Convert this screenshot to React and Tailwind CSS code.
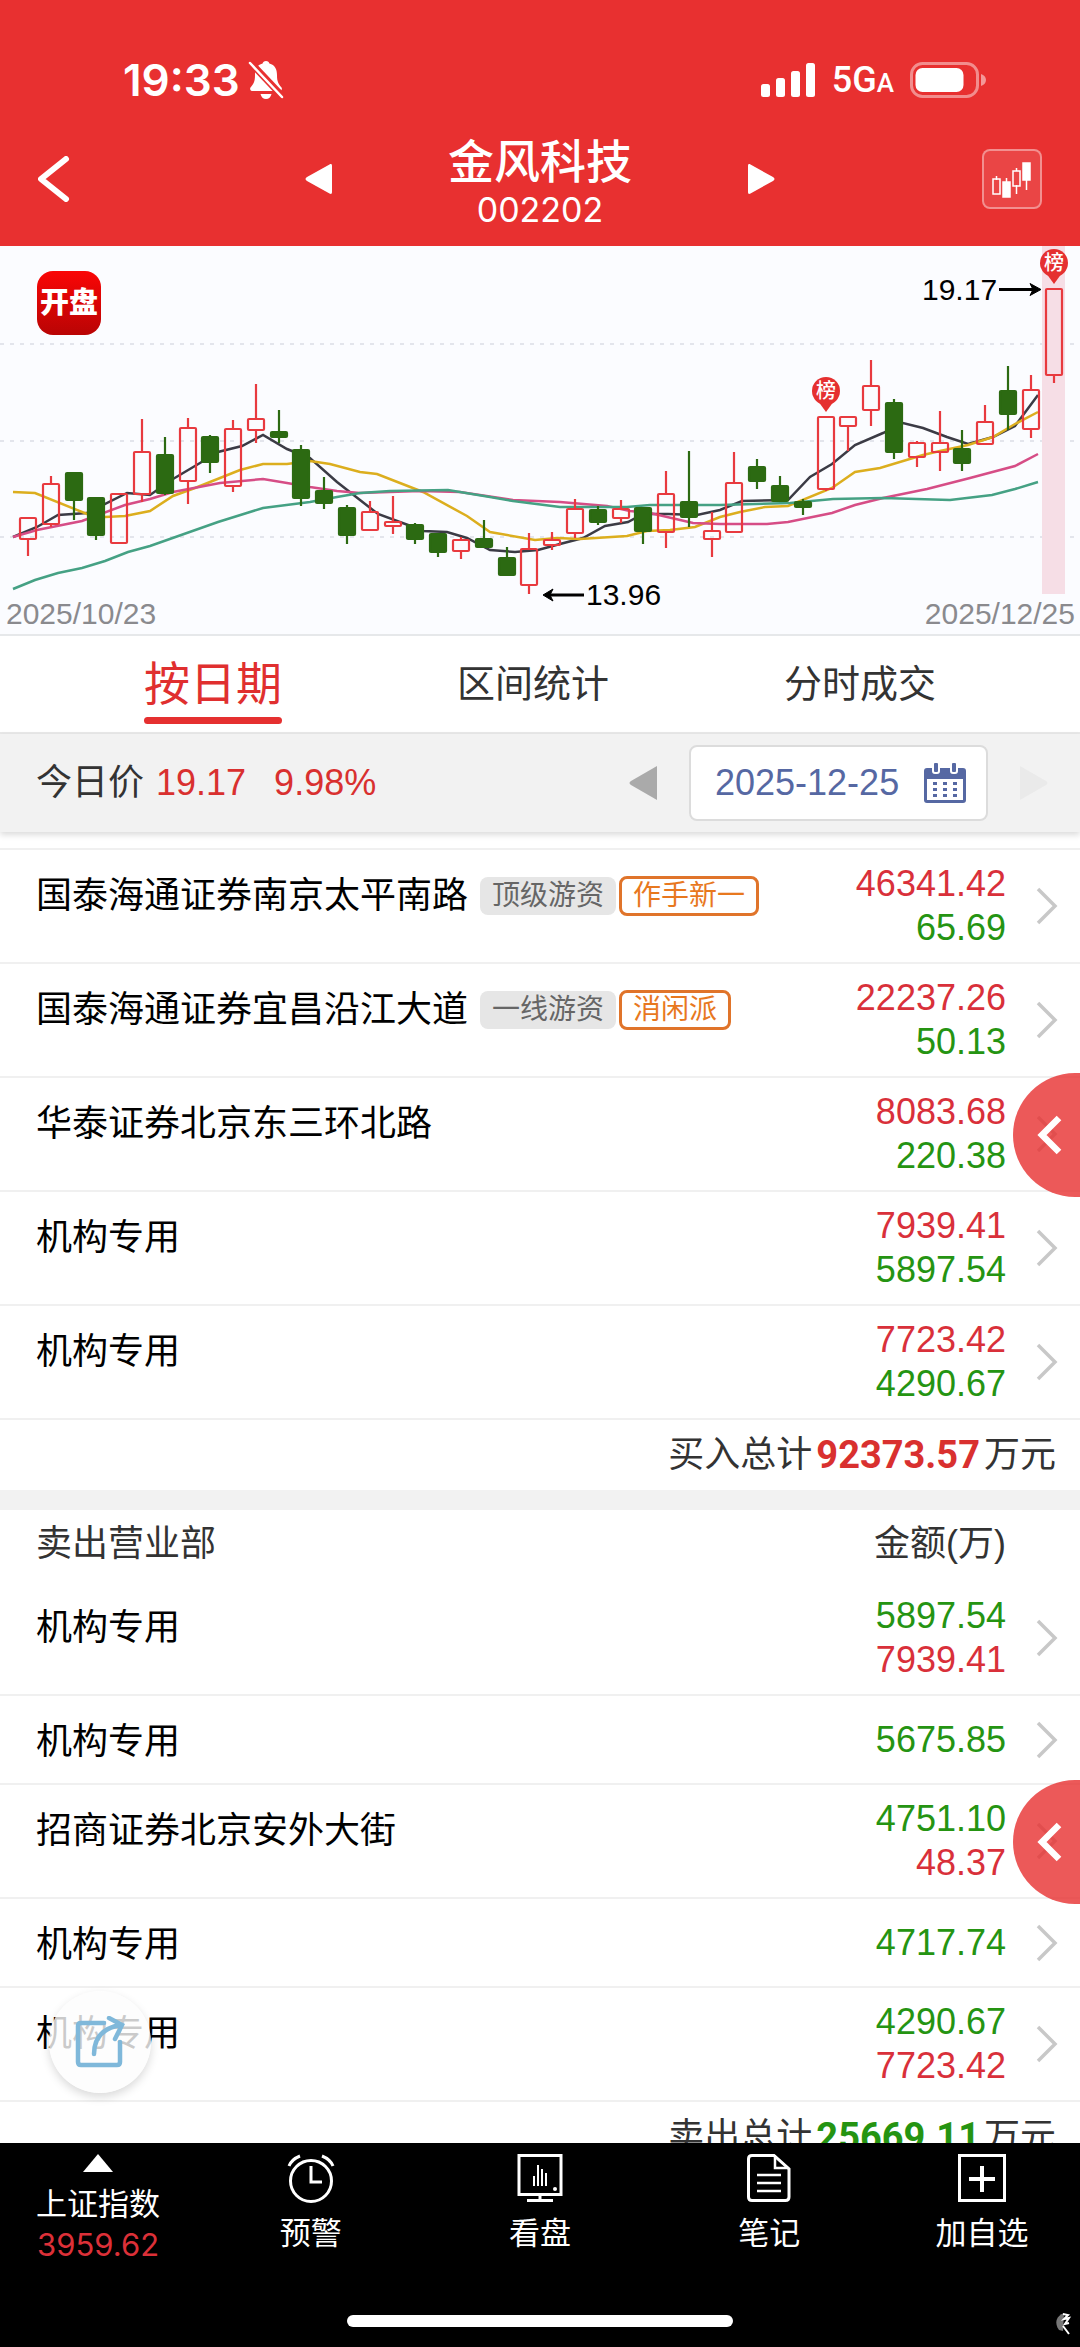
import { useState } from 'react'
import clsx from 'clsx'

const RED = '#e83a3f'
const GREEN = '#2c6a12'

// [high, body top, body bottom, low, rising]
const candles = [
  [518, 518, 539, 556, 1],
  [476, 484, 524, 527, 1],
  [472, 473, 500, 520, 0],
  [498, 498, 535, 540, 0],
  [494, 494, 543, 543, 1],
  [419, 452, 494, 502, 1],
  [437, 455, 493, 495, 0],
  [418, 428, 481, 504, 1],
  [435, 437, 462, 473, 0],
  [420, 429, 486, 492, 1],
  [384, 419, 430, 443, 1],
  [410, 432, 437, 443, 0],
  [445, 450, 498, 506, 0],
  [477, 491, 503, 509, 0],
  [505, 508, 535, 544, 0],
  [501, 512, 530, 530, 1],
  [496, 522, 526, 534, 1],
  [523, 525, 539, 544, 0],
  [533, 534, 552, 557, 0],
  [537, 540, 551, 559, 1],
  [520, 539, 547, 548, 0],
  [547, 558, 575, 576, 0],
  [533, 549, 585, 594, 1],
  [532, 540, 545, 550, 1],
  [499, 509, 533, 538, 1],
  [506, 510, 522, 525, 0],
  [500, 509, 518, 523, 1],
  [508, 508, 531, 544, 0],
  [471, 494, 532, 548, 1],
  [451, 502, 517, 527, 0],
  [512, 531, 539, 557, 1],
  [452, 483, 532, 533, 1],
  [459, 467, 481, 489, 0],
  [476, 486, 501, 502, 0],
  [499, 502, 507, 515, 0],
  [417, 417, 489, 491, 1],
  [417, 417, 426, 451, 1],
  [360, 386, 410, 426, 1],
  [399, 403, 452, 459, 0],
  [441, 443, 457, 467, 1],
  [411, 443, 452, 471, 1],
  [430, 449, 463, 471, 0],
  [405, 422, 444, 444, 1],
  [366, 391, 414, 430, 0],
  [375, 390, 429, 438, 1],
  [289, 289, 375, 383, 1],
]

const averages = [
  {
    color: '#3b3b45',
    points:
      '13,537 37,527 58,515 87,513 127,493 150,495 173,479 200,463 218,452 242,446 263,435 287,449 310,458 337,482 360,500 378,514 408,525 423,531 447,532 467,538 490,550 515,552 538,550 560,544 583,538 605,526 628,522 643,514 668,514 697,515 720,510 742,501 788,500 810,477 832,464 855,445 883,433 903,423 923,428 947,437 968,444 993,437 1015,426 1038,395',
  },
  {
    color: '#dcae1e',
    points:
      '13,492 35,493 87,514 105,517 125,516 150,511 173,496 195,488 240,470 263,464 287,464 310,461 330,464 360,472 377,474 423,492 467,516 490,532 535,540 557,538 580,539 627,536 647,531 670,530 695,527 720,517 740,512 765,507 788,506 832,488 855,472 880,468 923,455 940,451 968,445 993,437 1015,424 1038,412',
  },
  {
    color: '#d64d86',
    points:
      '13,537 37,530 82,521 125,505 150,499 173,492 220,483 263,479 287,483 310,487 337,491 360,493 420,491 460,492 513,500 560,502 607,506 630,511 650,513 693,523 720,524 767,524 788,522 832,513 855,505 883,498 927,489 970,478 1015,466 1038,454',
  },
  {
    color: '#45a184',
    points:
      '13,589 35,580 58,573 82,568 105,561 128,552 150,546 218,522 263,508 310,502 337,497 360,493 390,491 448,490 490,497 513,501 560,507 627,507 650,505 720,505 790,503 833,499 883,498 950,500 992,495 1015,489 1038,482',
  },
]

const buyers = [
  { name: '国泰海通证券南京太平南路', level: '顶级游资', alias: '作手新一', buy: '46341.42', sell: '65.69' },
  { name: '国泰海通证券宜昌沿江大道', level: '一线游资', alias: '消闲派', buy: '22237.26', sell: '50.13' },
  { name: '华泰证券北京东三环北路', buy: '8083.68', sell: '220.38' },
  { name: '机构专用', buy: '7939.41', sell: '5897.54' },
  { name: '机构专用', buy: '7723.42', sell: '4290.67' },
]

const sellers = [
  { name: '机构专用', sell: '5897.54', buy: '7939.41' },
  { name: '机构专用', sell: '5675.85' },
  { name: '招商证券北京安外大街', sell: '4751.10', buy: '48.37' },
  { name: '机构专用', sell: '4717.74' },
  { name: '机构专用', sell: '4290.67', buy: '7723.42' },
]

const tabs = ['按日期', '区间统计', '分时成交']

function StatusBar() {
  return (
    <div className="flex h-28 items-center justify-between pt-12 pr-[94px] pl-[123px] text-white">
      <div className="flex items-center gap-2 font-[Inter] text-[44px] leading-none font-semibold">
        19:33
        <svg className="h-[38px] w-9" viewBox="0 0 36 38" fill="currentColor">
          <path d="M18 0c2 0 3 1 3.4 2.6C27 4 29 8.500 29 14c0 7 1.500 9 4.500 12.500.8 1 .3 3.500-1.500 3.500H4c-1.800 0-2.300-2.500-1.500-3.500C5.500 23 7 21 7 14c0-5.500 2-10 7.600-11.400C15 1 16 0 18 0z" />
          <path d="M12.500 33h11c-.6 3-2.800 5-5.500 5s-4.900-2-5.500-5z" />
          <path d="M2 1l33 35" stroke="#e83030" strokeWidth="7" />
          <path d="M2 2l32 34" stroke="currentColor" strokeWidth="2.500" strokeLinecap="round" />
        </svg>
      </div>
      <div className="flex items-center">
        <svg className="h-[34px] w-[54px]" viewBox="0 0 54 34" fill="currentColor">
          <rect x="0" y="21" width="9" height="13" rx="2.500" />
          <rect x="15" y="15" width="9" height="19" rx="2.500" />
          <rect x="30" y="8" width="9" height="26" rx="2.500" />
          <rect x="45" y="0" width="9" height="34" rx="2.500" />
        </svg>
        <span className="ml-[17px] font-[Roboto] text-4xl leading-none font-medium">
          5G<span className="text-[26px]">A</span>
        </span>
        <svg className="ml-4 h-9 w-[76px]" viewBox="0 0 76 36" fill="none">
          <rect x="1.500" y="1.500" width="66" height="33" rx="11" stroke="#fff" strokeOpacity=".45" strokeWidth="3" />
          <rect x="5.500" y="6" width="48" height="24" rx="7" fill="#fff" />
          <path d="M71 12c3 1 5 3 5 6s-2 5-5 6z" fill="#fff" fillOpacity=".5" />
        </svg>
      </div>
    </div>
  )
}

function NavBar() {
  return (
    <div className="grid h-[134px] grid-cols-[1fr_auto_1fr] items-center px-[38px] text-white">
      <button aria-label="返回" className="w-8">
        <svg className="h-[46px] w-8" viewBox="0 0 32 46" fill="none">
          <path d="M28 3L3 23l25 20" stroke="#fff" strokeWidth="6" strokeLinecap="round" strokeLinejoin="round" />
        </svg>
      </button>
      <div className="flex items-center gap-[115px]">
        <button aria-label="上一只">
          <svg className="h-8 w-7" viewBox="0 0 28 32" fill="#fff">
            <path d="M27 3v26c0 2-1 2.500-2.500 1.500L2 18c-2-1.200-2-2.800 0-4L24.500 1.500C26 .5 27 1 27 3z" />
          </svg>
        </button>
        <div className="pt-[14px] text-center">
          <h1 className="text-[46px] leading-[48px] font-medium">金风科技</h1>
          <p className="font-[Inter] text-[34px] leading-[48px]">002202</p>
        </div>
        <button aria-label="下一只">
          <svg className="h-8 w-7" viewBox="0 0 28 32" fill="#fff">
            <path d="M1 3v26c0 2 1 2.500 2.500 1.500L26 18c2-1.200 2-2.800 0-4L3.500 1.500C2 .5 1 1 1 3z" />
          </svg>
        </button>
      </div>
      <button
        aria-label="K线"
        className="flex h-[60px] w-[60px] items-center justify-center justify-self-end rounded-lg border-2 border-white/40 bg-white/10"
      >
        <svg className="h-[38px] w-10" viewBox="0 0 40 38" fill="none" stroke="#fff" strokeWidth="1.500">
          <path d="M4.500 16v4M24.500 8v3M24.500 25v9M14.500 18v4M34.500 20v10" />
          <rect x="1" y="19" width="7" height="15" />
          <rect x="11" y="22" width="7" height="15" fill="#fff" />
          <rect x="21" y="11" width="7" height="15" />
          <rect x="31" y="3" width="7" height="17" fill="#fff" />
        </svg>
      </button>
    </div>
  )
}

function Pin({ x, y }) {
  return (
    <g>
      <path d={`M${x - 8} ${y + 10}L${x} ${y + 21}L${x + 8} ${y + 10}z`} fill="#e53030" />
      <circle cx={x} cy={y} r="14" fill="#e53030" />
      <text x={x} y={y + 7} textAnchor="middle" fontSize="20" fontWeight="500" fill="#fff">
        榜
      </text>
    </g>
  )
}

function Chart() {
  return (
    <section className="relative border-b-2 border-[#e6e8ea] bg-[#fbfcff]">
      <svg className="block w-full" viewBox="0 246 1080 388">
        {[344, 441, 537].map((y) => (
          <line key={y} x1="0" x2="1080" y1={y} y2={y} stroke="#dcdde6" strokeWidth="1.500" strokeDasharray="4 6" />
        ))}
        <rect x="1042" y="246" width="23" height="348" fill="#f6dee6" />
        {averages.map((line) => (
          <polyline key={line.color} points={line.points} fill="none" stroke={line.color} strokeWidth="2.500" />
        ))}
        {candles.map(([high, top, bottom, low, up], i) => {
          const x = Math.round(28 + i * 22.79)
          const color = up ? RED : GREEN
          return (
            <g key={i} stroke={color} strokeWidth="2.200">
              <path d={`M${x} ${high}V${top}M${x} ${bottom}V${low}`} />
              <rect x={x - 8} y={top} width="16" height={bottom - top} rx="1" fill={up ? 'none' : color} />
            </g>
          )
        })}
        <Pin x={826} y={391} />
        <Pin x={1054} y={263} />
        <g stroke="#000" strokeWidth="3">
          <path d="M999 289.500H1037M547 595H584" />
          <path d="M1030 283.500l11 6-11 6 3-6zM553 589l-10 6 10 6-3-6z" strokeWidth="1" />
        </g>
        <g className="font-['Liberation_Sans']" fontSize="30">
          <text x="922" y="300">19.17</text>
          <text x="586" y="605">13.96</text>
          <text x="6" y="624" fill="#8a8a8e">2025/10/23</text>
          <text x="1075" y="624" textAnchor="end" fill="#8a8a8e">2025/12/25</text>
        </g>
      </svg>
      <div className="absolute top-[25px] left-[37px] flex h-16 w-16 items-center justify-center rounded-2xl bg-linear-to-b from-[#fa0606] to-[#b90404] text-[29px] leading-none font-black text-white">
        开盘
      </div>
    </section>
  )
}

function Tabs() {
  const [active, setActive] = useState(0)

  return (
    <nav className="flex h-[98px] justify-between border-b-2 border-[#e8e8e8] px-36">
      {tabs.map((label, i) => (
        <button
          key={label}
          onClick={() => setActive(i)}
          className={clsx('relative', active === i ? 'text-[46px] text-[#e02f2f]' : 'text-[38px] text-[#333]')}
        >
          {label}
          {active === i && <span className="absolute inset-x-0 bottom-2 h-[7px] rounded-full bg-[#e53030]" />}
        </button>
      ))}
    </nav>
  )
}

function PriceBar() {
  return (
    <div className="relative flex h-[98px] items-center bg-[#f2f2f2] pr-8 pl-9 shadow-[0_3px_6px_rgba(0,0,0,0.14)]">
      <p className="flex-1 text-4xl text-[#333]">
        今日价
        <span className="ml-3 text-[#d9302f]">19.17</span>
        <span className="ml-7 text-[#d9302f]">9.98%</span>
      </p>
      <button aria-label="前一天" className="mr-8">
        <svg className="h-[34px] w-7" viewBox="0 0 28 34" fill="#aaa">
          <path d="M28 0v34L2 19c-2-1.300-2-2.700 0-4z" />
        </svg>
      </button>
      <label className="flex h-[76px] w-[299px] items-center rounded-lg border-2 border-[#dcdcdc] bg-white pr-5 pl-6">
        <input
          type="text"
          aria-label="日期"
          defaultValue="2025-12-25"
          className="min-w-0 flex-1 bg-transparent text-4xl text-[#5668a3] outline-none"
        />
        <svg className="h-10 w-[42px]" viewBox="0 0 42 40" fill="#5668a3">
          <path fillRule="evenodd" d="M3 5h36c2 0 3 1 3 3v29c0 2-1 3-3 3H3c-2 0-3-1-3-3V8c0-2 1-3 3-3zm0 11v21h36V16z" />
          <g stroke="#fff" strokeWidth="2">
            <rect x="9" y="-1" width="6" height="11" rx="2" />
            <rect x="27" y="-1" width="6" height="11" rx="2" />
          </g>
          {[19, 25, 31].map((y) =>
            [9, 19, 29].map((x) => <rect key={`${x}-${y}`} x={x} y={y} width="4" height="3" />)
          )}
        </svg>
      </label>
      <button aria-label="后一天" className="ml-8">
        <svg className="h-[34px] w-7" viewBox="0 0 28 34" fill="#eaeaea">
          <path d="M0 0v34l26-15c2-1.300 2-2.700 0-4z" />
        </svg>
      </button>
    </div>
  )
}

function BrokerRow({ broker, sellFirst }) {
  const buy = broker.buy && <p className="text-[#d9303a]">{broker.buy}</p>
  const sell = <p className="text-[#259412]">{broker.sell}</p>

  return (
    <li className="flex min-h-[89px] border-b-2 border-[#f0f0f0] pr-[22px] pl-9">
      <div className="flex flex-1 items-start pt-5">
        <div className="flex h-[52px] items-center">
          <span className="text-4xl text-black">{broker.name}</span>
          {broker.level && (
            <span className="ml-3 flex h-[38px] items-center rounded-lg bg-[#e6e6e6] px-3 text-[28px] text-[#666]">
              {broker.level}
            </span>
          )}
          {broker.alias && (
            <span className="ml-[3px] flex h-10 items-center rounded-lg border-3 border-[#e0742a] px-[11px] text-[28px] text-[#e8781e]">
              {broker.alias}
            </span>
          )}
        </div>
      </div>
      <div className="self-center py-3 text-right text-4xl leading-[44px]">
        {sellFirst ? sell : buy}
        {sellFirst ? buy : sell}
      </div>
      <svg className="ml-[30px] h-[38px] w-[22px] self-center" viewBox="0 0 22 38" fill="none">
        <path d="M2 2l17 17L2 36" stroke="#c8c8c8" strokeWidth="3.500" />
      </svg>
    </li>
  )
}

function Total({ label, value, color }) {
  return (
    <p className="flex h-[70px] items-center justify-end pr-6 text-4xl text-[#333]">
      {label}
      <span className={clsx('mx-1 font-[Roboto] text-[38px] font-bold', color)}>{value}</span>
      万元
    </p>
  )
}

function SideHandle({ className }) {
  return (
    <button
      aria-label="展开"
      className={clsx('absolute right-0 flex h-[124px] w-[67px] items-center rounded-l-full bg-[#e72f2f]/80 pl-6', className)}
    >
      <svg className="h-10 w-[26px]" viewBox="0 0 26 40" fill="none">
        <path d="M22 3L5 20l17 17" stroke="#fff" strokeWidth="6.500" />
      </svg>
    </button>
  )
}

function NavItem({ label, children }) {
  return (
    <button className="flex flex-col items-center gap-[10px] pt-[10px] text-[31px] leading-[42px] text-white">
      <svg className="h-[50px] w-[50px]" viewBox="0 0 50 50" fill="none" stroke="#fff" strokeWidth="3">
        {children}
      </svg>
      {label}
    </button>
  )
}

function BottomBar() {
  return (
    <footer className="relative h-[204px] shrink-0 bg-black">
      <div className="grid grid-cols-[196fr_229fr_229fr_229fr_196fr] items-start">
        <button className="flex flex-col items-center pt-[10px] text-[31px] leading-10 text-white">
          <svg className="mb-3 h-5 w-8" viewBox="0 0 32 20" fill="#fff">
            <path d="M16 1l15 18H1z" />
          </svg>
          上证指数
          <span className="font-[Inter] text-[#dc3038]">3959.62</span>
        </button>
        <NavItem label="预警">
          <circle cx="25" cy="28" r="20.500" />
          <path d="M25 13v16h11M3 13c2-5 6-8 11-10M47 13c-2-5-6-8-11-10" />
        </NavItem>
        <NavItem label="看盘">
          <path d="M4 2.500h42v39H4z" />
          <path d="M4 41.500h42M25 42v5M12 47.500h26" />
          <path d="M19 23v10M23 12v21M27 16v17M31 20v13" strokeWidth="2" />
          <circle cx="40" cy="36" r="2" fill="#fff" stroke="none" />
        </NavItem>
        <NavItem label="笔记">
          <path d="M8 2.500h22L45 16v28c0 2-1 3.500-3.500 3.500H8c-2 0-3.500-1-3.500-3.500V6c0-2 1-3.500 3.500-3.500z" />
          <path d="M31 3v12h13" strokeWidth="2.500" />
          <path d="M13 22h24M13 30h24M13 38h24" strokeWidth="2.500" />
        </NavItem>
        <NavItem label="加自选">
          <path d="M2.500 2.500h45v45h-45z" />
          <path d="M25 13v26M12 26h26" strokeWidth="4" />
        </NavItem>
      </div>
      <div className="absolute bottom-5 left-1/2 h-3 w-[386px] -translate-x-1/2 rounded-full bg-white" />
      <svg className="absolute right-2 bottom-3 h-6 w-5" viewBox="0 0 20 24" fill="none">
        <path d="M12 2C4 5 2 12 7 19l4 1z" fill="#777" />
        <path d="M11 3l5 1-4 4 5-1-4 6 4-1M11 15l6 8" stroke="#fff" strokeWidth="2" />
      </svg>
    </footer>
  )
}

export default function App() {
  return (
    <div className="relative flex h-screen flex-col overflow-hidden bg-white font-['Liberation_Sans','Noto_Sans_CJK_SC',sans-serif]">
      <header className="shrink-0 bg-[#e83030]">
        <StatusBar />
        <NavBar />
      </header>
      <div className="shrink-0">
        <Chart />
        <Tabs />
        <PriceBar />
      </div>

      <main className="min-h-0 flex-1 overflow-hidden">
        <ul className="mt-4 border-t-2 border-[#f0f0f0]">
          {buyers.map((broker, i) => (
            <BrokerRow key={i} broker={broker} />
          ))}
        </ul>
        <Total label="买入总计" value="92373.57" color="text-[#d9302f]" />

        <div className="h-5 bg-[#f2f2f2]" />

        <div className="flex h-[72px] items-center justify-between pr-[74px] pb-1 pl-9 text-4xl text-[#333]">
          <h2>卖出营业部</h2>
          <span>金额(万)</span>
        </div>
        <ul>
          {sellers.map((broker, i) => (
            <BrokerRow key={i} broker={broker} sellFirst />
          ))}
        </ul>
        <Total label="卖出总计" value="25669.11" color="text-[#259412]" />
      </main>

      <SideHandle className="top-[1073px]" />
      <SideHandle className="top-[1780px]" />

      <button
        aria-label="分享"
        className="absolute bottom-[254px] left-[49px] flex h-[102px] w-[102px] items-center justify-center rounded-full bg-[#fcfcfc]/80 shadow-[0_4px_10px_rgba(0,0,0,0.15)]"
      >
        <svg className="h-[52px] w-[50px]" viewBox="0 0 50 52" fill="none" stroke="#7fb8da" strokeWidth="4.500">
          <path d="M29 7H6c-2 0-3 1-3 3v36c0 2 1 3 3 3h36c2 0 3-1 3-3V26" strokeLinecap="round" />
          <path d="M19 38c0-16 8-26 27-29M34 2l13 7-7 14" strokeLinecap="round" />
        </svg>
      </button>

      <BottomBar />
    </div>
  )
}
